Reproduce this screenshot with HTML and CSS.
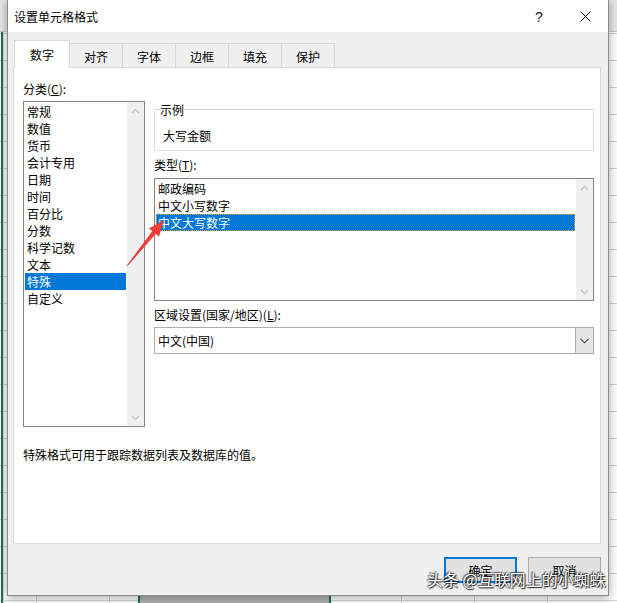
FILE: index.html
```html
<!DOCTYPE html>
<html lang="zh-CN">
<head>
<meta charset="utf-8">
<title>设置单元格格式</title>
<link rel="stylesheet" href="styles.css">
</head>
<body>
<div class="sheet">
  <div class="sheet-head"></div>
  <div class="sel-left"></div>
  <div class="sel-bottom"></div>
</div>

<div class="dialog">
  <div class="titlebar">
    <span class="title">设置单元格格式</span>
    <span class="tb-btn help">?</span>
    <span class="tb-btn close">
      <svg width="11" height="11" viewBox="0 0 11 11"><path d="M0.5 0.5L10.5 10.5M10.5 0.5L0.5 10.5" stroke="#000" stroke-width="1" fill="none"/></svg>
    </span>
  </div>
  <div class="body">
    <div class="tabs">
      <div class="tab active">数字</div>
      <div class="tab">对齐</div>
      <div class="tab">字体</div>
      <div class="tab">边框</div>
      <div class="tab">填充</div>
      <div class="tab">保护</div>
    </div>
    <div class="panel">
      <div class="label">分类(<u>C</u>):</div>
      <div class="cols">
        <div class="listbox cat">
          <ul class="items">
            <li>常规</li>
            <li>数值</li>
            <li>货币</li>
            <li>会计专用</li>
            <li>日期</li>
            <li>时间</li>
            <li>百分比</li>
            <li>分数</li>
            <li>科学记数</li>
            <li>文本</li>
            <li class="sel">特殊</li>
            <li>自定义</li>
          </ul>
          <div class="vscroll">
            <span class="sb-btn"><svg width="9" height="6" viewBox="0 0 9 6"><path d="M1 5L4.5 1.5L8 5" stroke="#c4c4c4" stroke-width="1.2" fill="none"/></svg></span>
            <span class="sb-btn"><svg width="9" height="6" viewBox="0 0 9 6"><path d="M1 1L4.5 4.5L8 1" stroke="#c4c4c4" stroke-width="1.2" fill="none"/></svg></span>
          </div>
        </div>
        <div class="right">
          <fieldset class="sample">
            <legend>示例</legend>
            <div class="sample-val">大写金额</div>
          </fieldset>
          <div class="label gap5">类型(<u>T</u>):</div>
          <div class="listbox types">
            <ul class="items">
              <li>邮政编码</li>
              <li>中文小写数字</li>
              <li class="sel focus">中文大写数字</li>
            </ul>
            <div class="vscroll">
              <span class="sb-btn"><svg width="9" height="6" viewBox="0 0 9 6"><path d="M1 5L4.5 1.5L8 5" stroke="#c4c4c4" stroke-width="1.2" fill="none"/></svg></span>
              <span class="sb-btn"><svg width="9" height="6" viewBox="0 0 9 6"><path d="M1 1L4.5 4.5L8 1" stroke="#c4c4c4" stroke-width="1.2" fill="none"/></svg></span>
            </div>
          </div>
          <div class="label gap5">区域设置(国家/地区)(<u>L</u>):</div>
          <div class="combo">
            <span class="combo-val">中文(中国)</span>
            <span class="drop"><svg width="9" height="6" viewBox="0 0 9 6"><path d="M0.5 0.8L4.5 4.8L8.5 0.8" stroke="#404040" stroke-width="1.1" fill="none"/></svg></span>
          </div>
        </div>
      </div>
      <div class="desc">特殊格式可用于跟踪数据列表及数据库的值。</div>
    </div>
    <div class="buttons">
      <button class="btn default">确定</button>
      <button class="btn">取消</button>
    </div>
  </div>
</div>

<svg class="arrow" width="50" height="60" viewBox="0 0 50 60">
  <polygon points="44,8 39.1,24.6 35.7,21.9 7.4,54.3 6.6,53.7 32.3,19.1 28.9,16.4" fill="#ec3f3b"/>
</svg>

<div class="watermark">头条 @互联网上的小蜘蛛</div>
</body>
</html>
```
FILE: styles.css
```css
* { box-sizing: border-box; }

body {
  margin: 0;
  width: 617px;
  height: 603px;
  overflow: hidden;
  position: relative;
  font-family: "Noto Sans CJK SC", "Microsoft YaHei", sans-serif;
  font-size: 12px;
  color: #000;
  background: #fff;
}

/* spreadsheet behind the dialog */
.sheet {
  position: absolute;
  inset: 0;
  background-color: #fff;
  background-image:
    repeating-linear-gradient(to bottom, #d4d4d4 0 1px, transparent 1px 27px),
    repeating-linear-gradient(to right, #d4d4d4 0 1px, transparent 1px 73px);
  background-position: 0 6px, 36px 0;
}
.sheet-head {
  height: 32px;
  background: #e6e6e6;
  border-bottom: 1px solid #c8c8c8;
}
.sel-left {
  position: absolute;
  left: 1px;
  top: 32px;
  bottom: 0;
  width: 2px;
  background: #217346;
}
.sel-bottom {
  position: absolute;
  left: 138px;
  width: 193px;
  top: 580px;
  bottom: 0;
  background: #b4b4b4;
  border-left: 2px solid #217346;
  border-right: 2px solid #217346;
}

/* dialog window */
.dialog {
  position: absolute;
  left: 7px;
  top: -1px;
  width: 602px;
  height: 597px;
  border: 1px solid #8a8a8a;
  background: #f0f0f0;
  box-shadow: 0 2px 10px rgba(0, 0, 0, 0.35);
  display: flex;
  flex-direction: column;
}

.titlebar {
  height: 32px;
  padding-top: 1px;
  background: #fff;
  display: flex;
  align-items: center;
}
.title {
  flex: 1;
  padding-left: 6px;
  line-height: 17px;
}
.tb-btn {
  width: 46px;
  height: 31px;
  display: flex;
  align-items: center;
  justify-content: center;
}
.help {
  font-family: "Liberation Sans", sans-serif;
  font-size: 14px;
  color: #222;
}

.body {
  flex: 1;
  padding: 8px 7px 0 5px;
  display: flex;
  flex-direction: column;
}

/* tabs */
.tabs {
  display: flex;
  align-items: flex-end;
  height: 28px;
  margin-bottom: -1px;
  padding-left: 1px;
  position: relative;
  z-index: 1;
}
.tab {
  width: 54px;
  height: 24px;
  margin-left: -1px;
  margin-bottom: 1px;
  border: 1px solid #d9d9d9;
  border-bottom: none;
  background: #f0f0f0;
  display: flex;
  align-items: center;
  justify-content: center;
  padding-top: 1px;
}
.tab.active {
  width: 56px;
  height: 28px;
  margin-left: 0;
  margin-bottom: 0;
  background: #fff;
  padding-top: 0;
}

/* tab panel */
.panel {
  height: 477px;
  background: #fff;
  border: 1px solid #d9d9d9;
  padding: 12px 0 0 9px;
}
.label {
  height: 17px;
  line-height: 17px;
  white-space: nowrap;
}
.label.gap5 { margin-top: 5px; }
u { text-decoration: underline; text-underline-offset: 1px; }

.cols {
  display: flex;
  gap: 9px;
  margin-top: 4px;
}

.listbox {
  border: 1px solid #828790;
  display: flex;
  background: #fff;
}
.listbox.cat {
  width: 122px;
  height: 326px;
}
.listbox.types {
  width: 440px;
  height: 123px;
  margin-top: 5px;
}
.items {
  flex: 1;
  list-style: none;
  margin: 0;
  padding: 1px;
}
.items li {
  height: 17px;
  line-height: 17px;
  padding-left: 2px;
  white-space: nowrap;
}
.items li.sel {
  background: #0078d7;
  color: #fff;
}
.items li.focus {
  outline: 1px dotted #f6a13a;
  outline-offset: -1px;
}
.vscroll {
  width: 17px;
  background: #f0f0f0;
  display: flex;
  flex-direction: column;
  justify-content: space-between;
}
.sb-btn {
  height: 17px;
  display: flex;
  align-items: center;
  justify-content: center;
}

.right {
  width: 440px;
  display: flex;
  flex-direction: column;
}
.sample {
  margin: 0;
  padding: 0 0 6px 5px;
  border: 1px solid #dcdcdc;
  min-width: 0;
}
.sample legend {
  padding: 0;
  line-height: 17px;
  height: 17px;
}
.sample-val {
  padding: 9px 0 0 3px;
  line-height: 17px;
}

.combo {
  margin-top: 4px;
  height: 27px;
  border: 1px solid #adadad;
  display: flex;
  background: #fff;
}
.combo-val {
  flex: 1;
  padding-left: 3px;
  line-height: 25px;
}
.drop {
  width: 18px;
  background: #e5e5e5;
  border-left: 1px solid #adadad;
  display: flex;
  align-items: center;
  justify-content: center;
}

.desc {
  margin-top: 19px;
  line-height: 17px;
}

/* buttons */
.buttons {
  display: flex;
  justify-content: flex-end;
  gap: 11px;
  margin-top: 13px;
}
.btn {
  width: 73px;
  height: 26px;
  padding: 0;
  background: #e1e1e1;
  border: 1px solid #adadad;
  font-family: inherit;
  font-size: 12px;
  color: #000;
}
.btn.default {
  border: 2px solid #0078d7;
}

/* overlays */
.arrow {
  position: absolute;
  left: 120px;
  top: 212px;
}
.watermark {
  position: absolute;
  left: 427px;
  top: 568px;
  font-size: 16px;
  line-height: 22px;
  color: #fff;
  white-space: nowrap;
  text-shadow: 0 0 2px rgba(0, 0, 0, 0.9), 1px 1px 1px rgba(0, 0, 0, 0.8), -1px -1px 1px rgba(0, 0, 0, 0.5);
}
```
